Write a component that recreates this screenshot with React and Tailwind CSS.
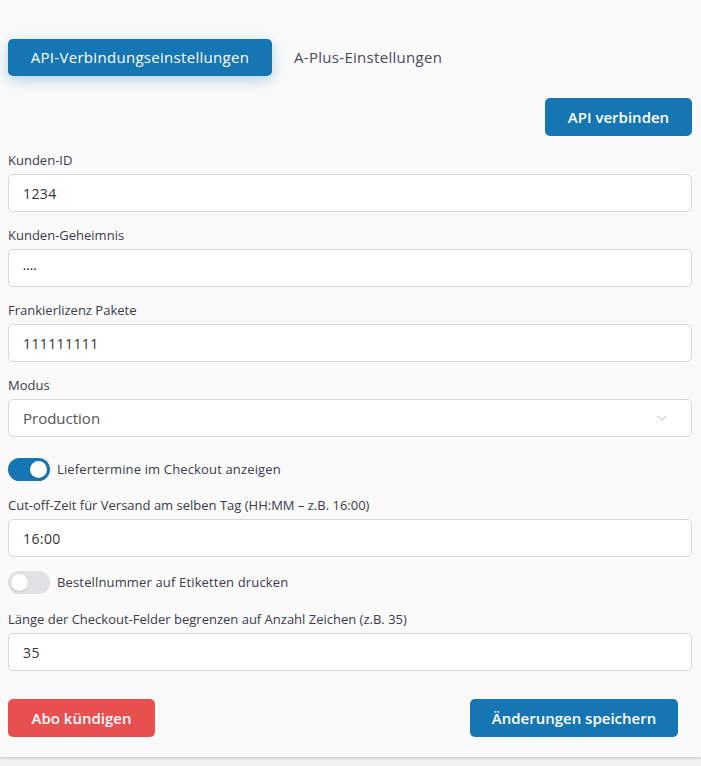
import React, { useState } from 'react';

const font = "font-['Open_Sans',sans-serif]";

const Field = ({ label, value, top = 'mt-[13px]', valueClass = 'text-[14px] tracking-[0.4px]' }) => (
  <div className={top}>
    <label className="block text-[13px] leading-[20px] text-[#3b3b4a] mb-[4px]">{label}</label>
    <input
      readOnly
      value={value}
      className={`w-full h-[38px] px-[14px] bg-white border border-[#d6d6de] rounded-[5px] text-[#333] outline-none ${valueClass}`}
    />
  </div>
);

const Toggle = ({ on, label, top }) => (
  <div className={`${top} flex items-center gap-[7px]`}>
    <div className={`w-[42px] h-[23px] rounded-full flex items-center px-[3px] ${on ? 'bg-[#1675b3] justify-end' : 'bg-[#e2e2e4] justify-start'}`}>
      <div className="w-[17px] h-[17px] rounded-full bg-white shadow-sm" />
    </div>
    <span className="text-[13px] tracking-[0.15px] text-[#3b3b4a]">{label}</span>
  </div>
);

const App = () => {
  const [tab, setTab] = useState(0);
  return (
    <div className={`min-h-screen bg-[#f1f1f1] ${font}`}>
      <div className="bg-[#fafafa] shadow-[0_1px_3px_rgba(0,0,0,0.2)] pt-[39px] pb-[20px] pl-[8px] pr-[9px]">
        <div className="flex items-center gap-[22px]">
          <button
            onClick={() => setTab(0)}
            className="h-[37px] w-[264px] rounded-[5px] bg-[#1675b3] text-white text-[15px] tracking-[0.3px] shadow-[0_4px_14px_rgba(22,117,179,0.3)]"
          >
            API-Verbindungseinstellungen
          </button>
          <button onClick={() => setTab(1)} className="text-[15px] tracking-[0.3px] text-[#4a4a5a]">
            A-Plus-Einstellungen
          </button>
        </div>

        <div className="flex justify-end mt-[22px]">
          <button className="h-[38px] w-[147px] rounded-[5px] bg-[#1675b3] text-white text-[15px] font-semibold">
            API verbinden
          </button>
        </div>

        <Field label="Kunden-ID" value="1234" top="mt-[14px]" />
        <Field label="Kunden-Geheimnis" value="••••" valueClass="text-[8px] tracking-[0.5px]" />
        <Field label="Frankierlizenz Pakete" value="111111111" />

        <div className="mt-[13px]">
          <label className="block text-[13px] leading-[20px] text-[#3b3b4a] mb-[4px]">Modus</label>
          <div className="w-full h-[38px] px-[14px] bg-white border border-[#d6d6de] rounded-[5px] flex items-center justify-between">
            <span className="text-[15px] text-[#555]">Production</span>
            <svg width="10" height="6" viewBox="0 0 10 6" className="mr-[10px]">
              <path d="M1 1l4 4 4-4" fill="none" stroke="#b8b8c0" strokeWidth="1" />
            </svg>
          </div>
        </div>

        <Toggle on label="Liefertermine im Checkout anzeigen" top="mt-[21px]" />
        <Field label="Cut-off-Zeit für Versand am selben Tag (HH:MM – z.B. 16:00)" value="16:00" top="mt-[14px]" />
        <Toggle on={false} label="Bestellnummer auf Etiketten drucken" top="mt-[14px]" />
        <Field label="Länge der Checkout-Felder begrenzen auf Anzahl Zeichen (z.B. 35)" value="35" top="mt-[15px]" />

        <div className="flex justify-between mt-[28px] pr-[14px]">
          <button className="h-[38px] w-[147px] rounded-[5px] bg-[#e84f4f] text-white text-[15px] font-semibold">
            Abo kündigen
          </button>
          <button className="h-[38px] w-[208px] rounded-[5px] bg-[#1675b3] text-white text-[15px] font-semibold">
            Änderungen speichern
          </button>
        </div>
      </div>
    </div>
  );
};

export default App;
